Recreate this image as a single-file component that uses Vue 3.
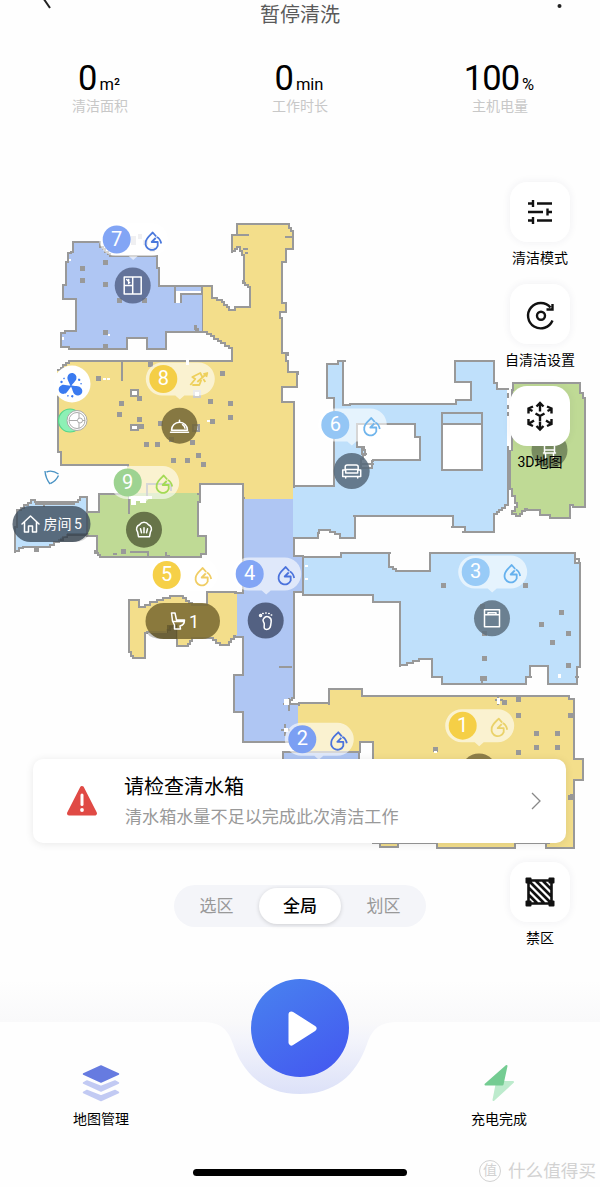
<template>
  <div class="page">
    <header class="nav">
      <svg class="nav-back" width="20" height="12" viewBox="0 0 20 12">
        <path d="M3 -8 L14 8" />
      </svg>
      <h1>暂停清洗</h1>
      <svg class="nav-more" width="20" height="12" viewBox="0 0 20 12">
        <circle cx="9.5" cy="6" r="2" />
      </svg>
    </header>

    <section class="stats">
      <div v-for="item in stats" :key="item.label" class="stat">
        <div class="stat-value">
          <span class="num">{{ item.value }}</span>
          <span class="unit">{{ item.unit }}</span>
        </div>
        <div class="stat-label">{{ item.label }}</div>
      </div>
    </section>

    <main class="stage">
      <svg class="map" width="600" height="740" viewBox="0 130 600 740">
        <!-- rooms -->
        <g shape-rendering="crispEdges">
          <path
            v-for="room in rooms"
            :key="room.id"
            :d="stairs(room.points, true)"
            :fill="room.color"
            class="wall"
          />
          <path
            v-for="(hole, i) in holes"
            :key="'h' + i"
            :d="stairs(hole, true)"
            fill="#fff"
            class="wall"
          />
          <rect x="443" y="414" width="38" height="10" fill="#bfe0fb" />
          <path class="wall" fill="none" d="M442 424H481" />
          <path fill="#fff" d="M176 291H202V294H181V303H176Z" />
          <path
            v-for="(s, i) in seams"
            :key="'s' + i"
            :d="s.d"
            :stroke="s.color"
            stroke-width="3"
            fill="none"
          />
          <path v-for="(d, i) in walls" :key="'w' + i" :d="d" fill="none" class="wall" />
          <rect
            v-for="([x, y], i) in obstacles"
            :key="'o' + i"
            :x="x - 2"
            :y="y - 2"
            width="5"
            height="5"
            fill="#999"
          />
          <g fill="#fff" stroke="#999" stroke-width="2">
            <rect x="131" y="390" width="7" height="6" />
            <rect x="131" y="425" width="7" height="5" />
            <rect x="193" y="425" width="6" height="6" fill="#c9d3e6" />
            <rect x="194" y="391" width="6" height="6" stroke="#ccc" />
          </g>
          <g fill="#fff">
            <path d="M129 496H152V499H146V503H140V501H136V505H131V499H129Z" />
            <rect x="69" y="259" width="2" height="2" />
            <rect x="108" y="334" width="2" height="2" />
            <rect x="62" y="337" width="2" height="3" />
            <rect x="103" y="378" width="3" height="2" />
            <rect x="107" y="378" width="3" height="2" />
            <rect x="207" y="420" width="3" height="2" />
            <rect x="305" y="565" width="3" height="2" />
            <rect x="305" y="578" width="3" height="2" />
            <rect x="186" y="358" width="3" height="7" />
            <rect x="558" y="674" width="3" height="4" />
            <rect x="497" y="698" width="3" height="6" />
            <rect x="434" y="751" width="3" height="2" />
            <rect x="507" y="390" width="4" height="60" />
            <rect x="284" y="699" width="5" height="6" />
            <rect x="284" y="728" width="4" height="4" />
          </g>
          <path fill="none" stroke="#999" stroke-width="2" d="M508 393V398M508 405V409M508 412V416M508 446V505" />
          <!-- clutter behind the first bubble of the top room -->
          <g fill="#d9d9de">
            <rect x="131" y="236" width="5" height="9" />
            <rect x="138" y="234" width="4" height="5" />
            <rect x="143" y="240" width="5" height="5" />
            <rect x="150" y="247" width="5" height="5" />
          </g>
        </g>

        <!-- room type badges -->
        <g v-for="b in badges" :key="b.icon" :transform="`translate(${b.x} ${b.y})`">
          <circle r="18" :fill="b.color" fill-opacity=".86" />
          <path :d="icons[b.icon]" class="badge-icon" />
        </g>
        <g class="pill">
          <rect x="12.5" y="506" width="78" height="36" rx="18" fill="#3b4a5a" fill-opacity=".78" />
          <path fill="#000" fill-opacity=".15" d="M60 542V538L67 536V533H90Q86 542 74 542Z" />
          <path class="badge-icon" d="M22 524L30.500 516L39 524M24.500 522V532H28.500V526H32.500V532H36.500V522" />
          <text x="43.500" y="529" font-size="14" word-spacing="-1">房间 5</text>
        </g>
        <g class="pill">
          <rect x="145.500" y="603" width="74.500" height="36" rx="18" fill="#7b6b32" fill-opacity=".88" />
          <path fill="#000" fill-opacity=".22" d="M147 633H167V625H177V639H164Q150 639 147 633Z" />
          <path class="badge-icon" d="M171.500 613H175L176.500 620H184.500Q184.500 625 180 626L180.500 629H174.500V625L172.500 621ZM173 621.500H184" />
          <text x="189" y="628" font-size="18">1</text>
        </g>

        <!-- fan and docked robot -->
        <circle cx="72" cy="384" r="18.500" fill="#fff" />
        <g fill="#3a7af0" transform="translate(71 386)">
          <g v-for="a in [10, 130, 250]" :key="a" :transform="`rotate(${a})`">
            <path d="M0 1C-2 -3 -5.500 -6 -5 -8.500A4.500 4.500 0 0 1 4 -8.500C4.500 -6 1 -3 0 1Z" />
            <circle cx="7" cy="-7.500" r="1.200" />
            <circle cx="9.500" cy="-4" r=".8" />
          </g>
        </g>
        <circle cx="70" cy="420.500" r="11.500" fill="#8df0b5" stroke="#55d68a" stroke-width="1.200" />
        <g fill="#fff" stroke="#aaa">
          <circle cx="77" cy="420.500" r="10" />
          <circle cx="77" cy="420.500" r="8" />
          <path d="M69 420.500H85M79 413V428" />
          <circle cx="80" cy="420.500" r="2.500" />
        </g>
        <path
          d="M45 471Q45.500 478 50 484M46.500 472Q52 469.500 58.500 474M58.500 475.500Q56 481 50.500 483.500"
          fill="none"
          stroke="#4a93c4"
          stroke-width="1.400"
        />

        <!-- cleaning order bubbles -->
        <g v-for="p in pins" :key="p.no" :transform="`translate(${p.x} ${p.y})`">
          <path
            d="M-1 -16.500H35A16.500 16.500 0 0 1 35 16.500H21L16.500 20.500L12 16.500H-1A16.500 16.500 0 0 1 -1 -16.500Z"
            fill="#fff"
            fill-opacity=".6"
          />
          <circle r="14" :fill="p.color" />
          <text class="pin-no" y="6">{{ p.no }}</text>
          <g class="drop" :stroke="p.line" transform="translate(36 1)">
            <path v-if="p.no === 8" d="M-9 5L-4 -1L-7 -3L1 -7L3 -3M-7 5H0L2 0M-2 2L7 -6M4 -6L8 -7L7 -3M4 -1L6 2" />
            <path v-else d="M3.500 -4L0 -8C-3 -5 -7 -2 -7 1.800A6.300 6.300 0 0 0 5 5.500L5 1.500H-1L3 -2.500M4 -3.500Q7.500 -2 8.500 3" />
          </g>
        </g>
      </svg>

      <nav class="tools">
        <div v-for="tool in tools" :key="tool.name" class="tool">
          <div class="tool-card">
            <svg width="30" height="30" viewBox="-15 -15 30 30">
              <path :d="tool.path" />
            </svg>
          </div>
          <span>{{ tool.name }}</span>
        </div>
      </nav>

      <section class="notice">
        <svg width="32" height="32" viewBox="0 0 32 32">
          <path d="M16 3L29 28.500H3Z" fill="#e04a45" stroke="#e04a45" stroke-width="4" stroke-linejoin="round" />
          <path d="M16 10V19.500" stroke="#fff" stroke-width="3" stroke-linecap="round" />
          <circle cx="16" cy="25" r="1.900" fill="#fff" />
        </svg>
        <div class="notice-text">
          <strong>请检查清水箱</strong>
          <p>清水箱水量不足以完成此次清洁工作</p>
        </div>
        <svg width="12" height="20" viewBox="0 0 12 20">
          <path d="M2 2L10 10L2 18" fill="none" stroke="#888" stroke-width="1.300" />
        </svg>
      </section>

      <section class="controls">
        <div class="switch">
          <span
            v-for="m in modes"
            :key="m"
            :class="{ active: m === mode }"
            @click="mode = m"
          >{{ m }}</span>
        </div>
        <div class="tool">
          <div class="tool-card">
            <svg width="32" height="32" viewBox="-16 -16 32 32">
              <path class="thick" d="M-11.500 -11.500H11.500V11.500H-11.500ZM-11 -11L11 11M-4 -11L11 4M3 -11L11 -3M-11 -4L4 11M-11 3L-3 11" />
              <g class="solid">
                <rect x="-14.500" y="-14.500" width="6" height="6" rx="1" />
                <rect x="8.500" y="-14.500" width="6" height="6" rx="1" />
                <rect x="-14.500" y="8.500" width="6" height="6" rx="1" />
                <rect x="8.500" y="8.500" width="6" height="6" rx="1" />
              </g>
            </svg>
          </div>
          <span>禁区</span>
        </div>
      </section>
    </main>

    <footer class="bottom">
      <svg class="bottom-bg" width="600" height="120" viewBox="0 0 600 120">
        <defs>
          <linearGradient id="shade" x1="0" y1="0" x2="0" y2="1">
            <stop offset="0" stop-color="#fefefe" />
            <stop offset="1" stop-color="#f9f9fa" />
          </linearGradient>
          <linearGradient id="dip" x1="0" y1="0" x2="0" y2="1">
            <stop offset="0" stop-color="#f9f9fa" />
            <stop offset=".25" stop-color="#f3f4fb" />
            <stop offset="1" stop-color="#dce1f8" />
          </linearGradient>
          <linearGradient id="play" x1=".2" y1="0" x2=".8" y2="1">
            <stop offset="0" stop-color="#4880ef" />
            <stop offset="1" stop-color="#4459f0" />
          </linearGradient>
        </defs>
        <rect width="600" height="42" fill="url(#shade)" />
        <path d="M205 42C222 43 228 50 233 64C244 96 266 114 300 114S356 96 367 64C372 50 378 43 395 42Z" fill="url(#dip)" />
        <circle cx="300" cy="48" r="49" fill="url(#play)" />
        <path d="M291.500 34.500L313.500 48.500L291.500 62.500Z" fill="#fff" stroke="#fff" stroke-width="6" stroke-linejoin="round" />
      </svg>
      <div class="actions">
        <div class="action">
          <svg width="40" height="38" viewBox="0 0 40 38" stroke-linejoin="round">
            <g fill="#c2caf3" stroke="#c2caf3" stroke-width="1.500">
              <path d="M2.500 28.500L6 26.500L20 32L34 26.500L37.500 28.500L20 36.500Z" />
              <path d="M2.500 19L6 17L20 22.500L34 17L37.500 19L20 27Z" />
            </g>
            <path d="M20 2L37.500 10L20 18L2.500 10Z" fill="#667be0" stroke="#667be0" stroke-width="1.500" />
          </svg>
          <span>地图管理</span>
        </div>
        <div class="action">
          <svg width="40" height="38" viewBox="0 0 40 38" stroke-linejoin="round">
            <path d="M18 18H34L14.500 36Z" fill="#bdebcd" stroke="#bdebcd" stroke-width="2" />
            <path d="M27.500 2L23.500 20.500H6.500Z" fill="#74cc92" stroke="#74cc92" stroke-width="2" />
          </svg>
          <span>充电完成</span>
        </div>
      </div>
      <div class="home-bar"></div>
      <div class="brand">
        <span class="brand-logo">值</span>
        <span>什么值得买</span>
      </div>
    </footer>
  </div>
</template>

<script setup>
import { ref } from 'vue'

const YELLOW = '#f3de8b'
const BLUE = '#afc6f3'
const SKY = '#bfe0fb'
const GREEN = '#bfda95'

const mode = ref('全局')
const modes = ['选区', '全局', '划区']

const stats = [
  { value: '0', unit: 'm²', label: '清洁面积' },
  { value: '0', unit: 'min', label: '工作时长' },
  { value: '100', unit: '%', label: '主机电量' },
]

const tools = [
  {
    name: '清洁模式',
    path: 'M-12 -8.500H-7M-3 -8.500H12M-7 -12V-5M-12 0H3M7.500 0H12M7.500 -3.500V3.500M-12 8.500H-7M-3 8.500H12M-7 5V12',
  },
  {
    name: '自清洁设置',
    path: 'M12.500 6.500A12.700 12.700 0 1 1 10.500 -6.500M12.500 -10V-4.500H6.500M5 1.800A4 4 0 1 1 -3 1.800A4 4 0 1 1 5 1.800Z',
  },
  {
    name: '3D地图',
    path: 'M0 -4.500V-12.500M-3.500 -9.500L0 -13L3.500 -9.500M0 5.500V12.500M-3.500 10L0 13.500L3.500 10M0 5V0L-4.500 -2.500M0 0L4.500 -2.500M-11.500 -2.500V-7.500L-7 -9.500M11.500 -2.500V-7.500L7 -9.500M-11.500 3V8L-7 10M-11.500 8L-6 4.500M11.500 3V8L7 10M11.500 8L6 4.500M-11.500 -7L-7.500 -5M11.500 -7L7.500 -5',
  },
]

const rooms = [
  {
    id: 7,
    color: BLUE,
    points: [[73, 242], [98, 242], [100, 247], [110, 256], [157, 256], [157, 268], [159, 270], [159, 286], [204, 286], [204, 332], [200, 332], [195, 326], [196, 332], [168, 332], [166, 349], [147, 349], [147, 338], [127, 338], [127, 349], [69, 349], [69, 347], [61, 345], [61, 333], [65, 331], [76, 331], [76, 299], [63, 298], [63, 285], [66, 284], [66, 262], [68, 253], [71, 252]],
  },
  {
    id: 8,
    color: YELLOW,
    points: [[237, 224], [289, 224], [289, 228], [293, 233], [293, 249], [286, 249], [286, 262], [282, 262], [282, 303], [286, 303], [286, 312], [280, 313], [280, 318], [282, 318], [282, 353], [288, 355], [286, 361], [288, 372], [298, 374], [297, 387], [282, 388], [282, 402], [294, 401], [294, 498], [243, 498], [243, 484], [200, 484], [200, 494], [147, 494], [128, 494], [128, 465], [63, 465], [61, 452], [58, 451], [58, 397], [58, 370], [66, 363], [69, 361], [232, 361], [232, 348], [225, 343], [207, 332], [203, 332], [203, 286], [213, 286], [212, 298], [222, 302], [229, 310], [235, 307], [250, 306], [250, 287], [243, 281], [244, 255], [240, 247], [232, 253], [232, 235], [237, 234]],
  },
  {
    id: 6,
    color: SKY,
    points: [[338, 361], [346, 361], [343, 375], [343, 405], [350, 404], [455, 404], [456, 400], [471, 400], [471, 382], [455, 382], [455, 361], [494, 361], [494, 383], [497, 389], [508, 391], [508, 505], [502, 510], [494, 516], [494, 532], [462, 532], [465, 527], [451, 527], [453, 516], [353, 516], [355, 538], [340, 538], [340, 534], [330, 530], [319, 533], [318, 538], [294, 538], [294, 486], [334, 486], [334, 398], [327, 397], [327, 364]],
  },
  {
    id: 10,
    color: GREEN,
    points: [[513, 383], [581, 383], [580, 393], [585, 403], [585, 507], [573, 505], [570, 518], [552, 518], [550, 515], [542, 515], [540, 510], [527, 509], [520, 516], [512, 511], [517, 503], [510, 482], [510, 450], [512, 390]],
  },
  {
    id: 9,
    color: GREEN,
    points: [[99, 494], [198, 494], [200, 502], [198, 502], [198, 536], [206, 536], [206, 554], [201, 557], [103, 557], [95, 551], [97, 536], [87, 534], [87, 512], [99, 513]],
  },
  {
    id: 11,
    color: SKY,
    points: [[31, 500], [35, 502], [75, 502], [80, 497], [87, 499], [87, 535], [67, 537], [50, 547], [23, 548], [15, 553], [15, 527], [17, 510]],
  },
  {
    id: 5,
    color: YELLOW,
    points: [[129, 600], [138, 600], [139, 607], [150, 602], [170, 596], [180, 596], [192, 605], [208, 605], [207, 592], [234, 592], [236, 593], [236, 636], [229, 645], [223, 645], [213, 638], [192, 641], [188, 646], [178, 646], [177, 625], [167, 632], [147, 633], [145, 658], [133, 656], [129, 647]],
  },
  {
    id: 1,
    color: YELLOW,
    points: [[299, 703], [329, 705], [329, 689], [362, 689], [362, 696], [569, 696], [569, 699], [574, 700], [574, 759], [583, 760], [583, 780], [574, 780], [574, 848], [546, 848], [546, 843], [515, 843], [515, 848], [437, 848], [437, 843], [398, 843], [398, 847], [380, 847], [380, 843], [373, 843], [373, 742], [363, 742], [360, 752], [299, 752]],
  },
  {
    id: 2,
    color: BLUE,
    points: [[283, 752], [359, 752], [359, 790], [283, 790]],
  },
  {
    id: 4,
    color: BLUE,
    points: [[243, 498], [294, 498], [294, 556], [303, 556], [303, 592], [294, 594], [294, 698], [288, 704], [299, 704], [299, 742], [243, 742], [243, 712], [234, 712], [234, 675], [243, 675], [243, 637], [235, 637], [235, 593], [243, 593]],
  },
  {
    id: 3,
    color: SKY,
    points: [[303, 557], [341, 557], [341, 553], [391, 553], [389, 567], [396, 571], [430, 571], [430, 553], [575, 553], [575, 563], [581, 563], [580, 667], [577, 667], [577, 684], [548, 684], [548, 666], [530, 666], [530, 677], [526, 677], [526, 684], [442, 684], [442, 677], [432, 677], [432, 659], [425, 659], [407, 665], [400, 667], [400, 602], [373, 602], [373, 595], [303, 594]],
  },
]

const holes = [
  [[357, 424], [414, 424], [415, 437], [420, 438], [420, 460], [373, 461], [372, 468], [363, 468], [361, 459], [365, 450], [364, 447], [357, 447]],
  [[442, 413], [482, 413], [482, 470], [442, 470]],
]

// shared borders between two rooms have no wall
const seams = [
  { d: 'M204 287V331', color: YELLOW },
  { d: 'M245 497.500H293', color: YELLOW },
  { d: 'M130 494.500H197', color: GREEN },
  { d: 'M128 467V493', color: YELLOW },
  { d: 'M235.500 594V635', color: YELLOW },
  { d: 'M294.500 488V537', color: SKY },
  { d: 'M299.500 706V740', color: YELLOW },
  { d: 'M58.500 371V396', color: YELLOW },
]

const walls = [
  'M175 286V303M181 303V294H202V287',
  'M232 235H249M285 237H293M243 249H248M245 253H248',
  'M122 361V381',
  'M129 494V514M171 491V484H147V498',
  'M113 554H117M130 552H148V556M166 552V556H170',
  'M44 502V507M35 504H75',
  'M279 667H292M289 698V711M283 704H294',
  'M285 724V736M281 730H290',
  'M362 446V454H367M361 464H374',
  'M482 676V684M526 677H532M575 677H579M575 559H579V564',
  'M495 700H503M498 696V705',
  'M573 795H570M375 843H407M545 843H550M433 843H438M515 843H520',
]

const obstacles = [
  [82, 268], [82, 280], [105, 262], [105, 284], [119, 300], [144, 300], [105, 332], [105, 346],
  [98, 378], [150, 364], [222, 373], [121, 403], [139, 398], [119, 414], [139, 419], [141, 426],
  [210, 401], [230, 403], [230, 417], [212, 421], [160, 423], [146, 444], [157, 444], [171, 439],
  [192, 442], [198, 455], [173, 460], [187, 460], [203, 464],
  [443, 585], [525, 585], [561, 612], [541, 624], [568, 633], [552, 642], [484, 658], [568, 665],
  [482, 606], [484, 633], [482, 678], [484, 678],
  [518, 699], [518, 715], [570, 715], [536, 733], [557, 733], [536, 747], [557, 747], [518, 752],
  [435, 749], [570, 797], [504, 702], [123, 551], [36, 549],
]

const badges = [
  { icon: 'wardrobe', x: 132.7, y: 285.5, color: '#56658a' },
  { icon: 'dish', x: 179.5, y: 425.7, color: '#736735' },
  { icon: 'sofa', x: 351.7, y: 471, color: '#56697a' },
  { icon: 'chef', x: 144, y: 529.7, color: '#59633c' },
  { icon: 'foot', x: 265.7, y: 620.5, color: '#44506f' },
  { icon: 'bed', x: 492, y: 618.3, color: '#5d707f' },
  { icon: 'chair', x: 549.5, y: 450, color: '#6d8058' },
  { icon: 'plain', x: 479, y: 771.5, color: '#7d6e3c' },
]

const icons = {
  wardrobe: 'M-8.500 -8.500H8.500V8.500H-8.500ZM0 -8V8M-8 0H0M-6 -6L-3 -3M-4 -6V-2',
  dish: 'M-8 4.500A8 8 0 0 1 8 4.500ZM-9 6.500H9M0 -5.500V-4M3 -1Q5 0 5.500 2.500',
  sofa: 'M-6.500 -1V-4Q-6.500 -6 -4.500 -6H4.500Q6.500 -6 6.500 -4V-1M-9 -1H-6V2H6V-1H9V5.500H-9ZM-6 -1.500H6M-6 5.500V7M6 5.500V7',
  chef: 'M-5.500 7L-6.500 2A4.500 4.500 0 0 1 -4.500 -5A5.500 5.500 0 0 1 4.500 -5A4.500 4.500 0 0 1 6.500 2L5.500 7ZM0 -2V3M-3.500 -1L-2.500 3M3.500 -1L2.500 3',
  foot: 'M-2 -2C1 -6 6 -3 5.500 1C5 5 5 9 1 9C-3 9 -1 5 -1.500 3C-2 1 -4 0 -2 -2ZM-6 -5.500A1 1 0 1 0 -5 -6ZM-3 -7H-2.500M0 -7.500H.500M3 -7H3.500M5.500 -5.500H6',
  bed: 'M-7.500 -8.500H7.500V8.500H-7.500ZM-7.500 -3.500H7.500M-4 -4V-5.500H4V-4',
  chair: 'M-5 -4V3H5V-4M-6 3H6M-4 3V8M4 3V8M-5 0H5',
  plain: '',
}

const pins = [
  { no: 7, x: 116.7, y: 239.5, color: '#82a5f5', line: '#4a78dc' },
  { no: 8, x: 163.3, y: 379, color: '#f4ce46', line: '#eed05c' },
  { no: 9, x: 127.7, y: 482.5, color: '#9dd391', line: '#a3da55' },
  { no: 6, x: 335.3, y: 425, color: '#94c6f5', line: '#70b5ec' },
  { no: 5, x: 166.7, y: 575, color: '#f6d048', line: '#f0cd64' },
  { no: 4, x: 249.7, y: 574, color: '#82a5f5', line: '#4a72dc' },
  { no: 3, x: 475.7, y: 572, color: '#98cbf7', line: '#65b1ee' },
  { no: 2, x: 302.3, y: 739.3, color: '#7b9ff3', line: '#4a72dc' },
  { no: 1, x: 462.7, y: 725.7, color: '#f5cf46', line: '#ead26a' },
]

// turn slanted edges into small grid steps, the way the lidar map renders them
function stairs(points, closed) {
  const pts = closed ? [...points, points[0]] : points
  let d = `M${pts[0][0]} ${pts[0][1]}`
  for (let i = 1; i < pts.length; i++) {
    const [x0, y0] = pts[i - 1]
    const [x1, y1] = pts[i]
    const n = Math.max(1, Math.round(Math.min(Math.abs(x1 - x0), Math.abs(y1 - y0)) / 2.3))
    for (let k = 1; k <= n; k++) {
      d += `H${Math.round(x0 + ((x1 - x0) * k) / n)}V${Math.round(y0 + ((y1 - y0) * k) / n)}`
    }
  }
  return closed ? d + 'Z' : d
}
</script>

<style>
body {
  margin: 0;
  background: #fff;
}
</style>

<style scoped>
.page {
  width: 600px;
  height: 1187px;
  display: flex;
  flex-direction: column;
  overflow: hidden;
  background: #fefefe;
  color: #111;
  font-family: Roboto, "Noto Sans CJK SC", sans-serif;
}

.nav {
  display: flex;
  justify-content: space-between;
  height: 60px;
  padding: 0 30px 0 36px;
}

.nav h1 {
  margin: 0;
  padding-right: 6px;
  font-size: 20px;
  line-height: 30px;
  font-weight: 400;
  color: #5a5a5a;
}

.nav-back path {
  stroke: #222;
  stroke-width: 2;
}

.nav-more circle {
  fill: #222;
}

.stats {
  display: grid;
  grid-template-columns: repeat(3, 200px);
  height: 70px;
}

.stat {
  display: flex;
  flex-direction: column;
  align-items: center;
}

.stat-value {
  display: flex;
  align-items: baseline;
  gap: 3px;
  height: 36px;
  line-height: 36px;
  padding-right: 2px;
  color: #000;
}

.num {
  font-size: 34.5px;
  letter-spacing: -1px;
}

.unit {
  font-size: 16.5px;
}

.stat-label {
  font-size: 14px;
  line-height: 20px;
  color: #c8c8c8;
}

.stage {
  position: relative;
  display: flex;
  flex-direction: column;
  height: 850px;
  flex-shrink: 0;
}

.map {
  position: absolute;
  top: 0;
  left: 0;
}

.wall {
  stroke: #999;
  stroke-width: 2;
}

.badge-icon {
  fill: none;
  stroke: #fff;
  stroke-width: 1.5;
  stroke-linejoin: round;
  stroke-linecap: round;
}

.pill text {
  fill: #fff;
}

.pin-no {
  fill: #fff;
  font-size: 20px;
  text-anchor: middle;
}

.drop path {
  fill: none;
  stroke-width: 1.8;
  stroke-linejoin: round;
}

.tools {
  position: relative;
  align-self: flex-end;
  display: flex;
  flex-direction: column;
  gap: 16px;
  width: 120px;
  margin-top: 52px;
}

.tool {
  display: flex;
  flex-direction: column;
  align-items: center;
  gap: 6px;
  font-size: 14px;
  line-height: 20px;
  color: #000;
}

.tool-card {
  display: flex;
  align-items: center;
  justify-content: center;
  width: 60px;
  height: 60px;
  border-radius: 17px;
  background: #fff;
  box-shadow: 0 0 8px rgba(40, 40, 80, 0.07);
}

.tool-card svg {
  overflow: visible;
}

.tool-card path {
  fill: none;
  stroke: #111;
  stroke-width: 2.4;
}

.tool-card .thick {
  stroke-width: 2.6;
}

.tool-card .solid {
  fill: #111;
}

.notice {
  position: relative;
  display: flex;
  align-items: center;
  box-sizing: border-box;
  width: 533px;
  height: 84px;
  margin: 287px 0 0 33px;
  padding: 0 24px 0 33px;
  border-radius: 10px;
  background: #fff;
  box-shadow: 0 1px 8px rgba(0, 0, 0, 0.09);
}

.notice-text {
  flex: 1;
  padding: 2px 0 0 26px;
}

.notice strong {
  display: block;
  font-size: 20px;
  font-weight: 400;
  line-height: 30px;
  color: #000;
}

.notice p {
  margin: 0;
  padding-left: 1px;
  font-size: 17.1px;
  line-height: 30px;
  color: #999;
}

.controls {
  position: relative;
  display: grid;
  grid-template-columns: 252px 120px;
  column-gap: 54px;
  margin: 19px 0 0 174px;
}

.switch {
  display: grid;
  grid-template-columns: 85px 82px 85px;
  align-items: center;
  height: 42px;
  margin-top: 23px;
  border-radius: 21px;
  background: #f4f5f9;
  font-size: 17px;
  line-height: 36px;
  color: #999;
  text-align: center;
}

.switch .active {
  border-radius: 18px;
  background: #fff;
  color: #000;
  font-weight: 500;
  box-shadow: 0 1px 4px rgba(0, 0, 0, 0.16);
}

.bottom {
  position: relative;
  height: 207px;
}

.bottom-bg {
  position: absolute;
  top: 0;
  left: 0;
  overflow: visible;
}

.actions {
  position: relative;
  display: flex;
  justify-content: space-between;
  padding: 84px 61px 0;
}

.action {
  display: flex;
  flex-direction: column;
  align-items: center;
  gap: 7px;
  width: 80px;
  font-size: 14px;
  line-height: 20px;
  color: #000;
}

.home-bar {
  width: 214px;
  height: 7px;
  margin: 40px auto 0;
  border-radius: 4px;
  background: #000;
}

.brand {
  position: absolute;
  right: 4px;
  bottom: 4px;
  display: flex;
  align-items: center;
  gap: 7px;
  font-size: 17.6px;
  line-height: 24px;
  color: #d2d2d2;
}

.brand-logo {
  width: 20px;
  height: 20px;
  border: 1px solid #d2d2d2;
  border-radius: 50%;
  font-size: 14px;
  line-height: 19px;
  text-align: center;
}
</style>
